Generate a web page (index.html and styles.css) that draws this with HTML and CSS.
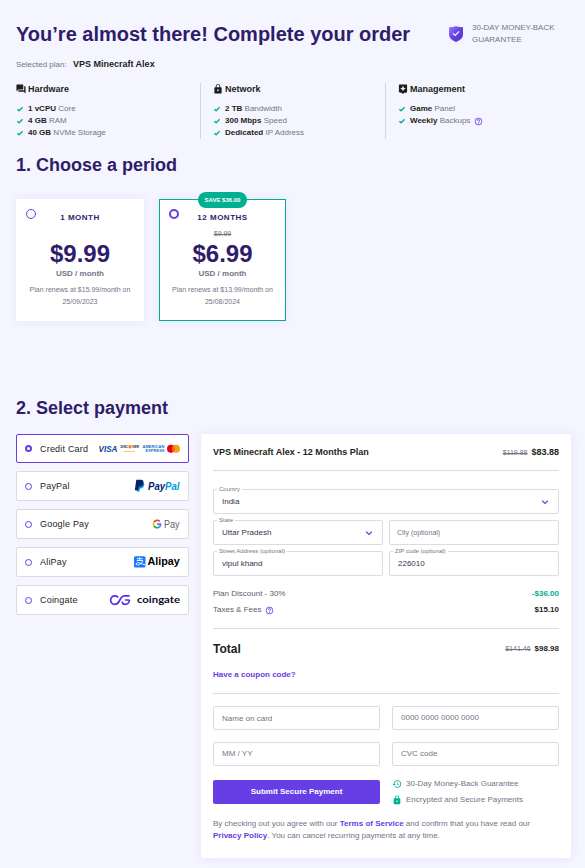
FILE: index.html
```html
<!DOCTYPE html>
<html lang="en">
<head>
<meta charset="utf-8">
<title>Complete your order</title>
<link rel="stylesheet" href="styles.css">
</head>
<body>
<svg width="0" height="0" class="defs" aria-hidden="true">
  <symbol id="check" viewBox="0 0 8 8"><path d="M1.4 4.2 3.1 5.8 6.6 2.3" fill="none" stroke="#00b090" stroke-width="1.4"/></symbol>
  <symbol id="help" viewBox="0 0 24 24"><path fill="#673de6" d="M11 18h2v-2h-2v2zm1-16C6.48 2 2 6.48 2 12s4.48 10 10 10 10-4.48 10-10S17.52 2 12 2zm0 18c-4.41 0-8-3.59-8-8s3.59-8 8-8 8 3.59 8 8-3.59 8-8 8zm0-14c-2.21 0-4 1.790-4 4h2c0-1.100.9-2 2-2s2 .9 2 2c0 2-3 1.750-3 5h2c0-2.250 3-2.500 3-5 0-2.210-1.790-4-4-4z"/></symbol>
  <symbol id="lock" viewBox="0 0 24 24"><path d="M18 8h-1V6c0-2.760-2.240-5-5-5S7 3.240 7 6v2H6c-1.100 0-2 .9-2 2v10c0 1.100.9 2 2 2h12c1.100 0 2-.9 2-2V10c0-1.100-.9-2-2-2zm-6 9c-1.100 0-2-.9-2-2s.9-2 2-2 2 .9 2 2-.9 2-2 2zm3.100-9H8.900V6c0-1.710 1.390-3.100 3.100-3.100s3.100 1.390 3.100 3.100v2z"/></symbol>
  <symbol id="chevron" viewBox="0 0 8 8"><path d="M1.200 2.700 4 5.400 6.800 2.700" fill="none" stroke="#673de6" stroke-width="1.200"/></symbol>
</svg>
<main class="page">
  <header class="top">
    <h1>You’re almost there! Complete your order</h1>
    <div class="guarantee">
      <svg width="16" height="18" viewBox="0 0 16 18"><defs><linearGradient id="sh" x1="0" y1="0" x2="1" y2="1"><stop offset="0" stop-color="#8c85ff"/><stop offset=".5" stop-color="#673de6"/><stop offset="1" stop-color="#5a2fd0"/></linearGradient></defs><path d="M1 2.300Q5 2.300 8 1.300q3 1 7 1v7.500q0 4.500-7 7.200Q1 14.300 1 9.800z" fill="url(#sh)"/><path d="m5 8.300 2.200 2.200 4-4.200" fill="none" stroke="#fff" stroke-width="1.200"/></svg>
      <p>30-DAY MONEY-BACK<br>GUARANTEE</p>
    </div>
  </header>
  <p class="selected">Selected plan: <b>VPS Minecraft Alex</b></p>

  <section class="specs">
    <div class="spec">
      <h3><svg width="10" height="10" viewBox="1 1 22 22"><path d="M21 6h-2v9H6v2c0 .55.45 1 1 1h11l4 4V7c0-.55-.45-1-1-1zm-4 6V3c0-.55-.45-1-1-1H3c-.55 0-1 .45-1 1v14l4-4h10c.55 0 1-.45 1-1z"/></svg>Hardware</h3>
      <ul>
        <li><svg><use href="#check"/></svg><b>1 vCPU</b> Core</li>
        <li><svg><use href="#check"/></svg><b>4 GB</b> RAM</li>
        <li><svg><use href="#check"/></svg><b>40 GB</b> NVMe Storage</li>
      </ul>
    </div>
    <div class="spec">
      <h3><svg width="10" height="10" viewBox="1 1 22 22"><use href="#lock" width="24" height="24"/></svg>Network</h3>
      <ul>
        <li><svg><use href="#check"/></svg><b>2 TB</b> Bandwidth</li>
        <li><svg><use href="#check"/></svg><b>300 Mbps</b> Speed</li>
        <li><svg><use href="#check"/></svg><b>Dedicated</b> IP Address</li>
      </ul>
    </div>
    <div class="spec">
      <h3><svg width="10" height="10" viewBox="1 1 22 22"><path fill-rule="evenodd" d="M19 2H5c-1.100 0-2 .9-2 2v14c0 1.100.9 2 2 2h4l3 3 3-3h4c1.100 0 2-.9 2-2V4c0-1.100-.9-2-2-2zm-5.120 10.880L12 17l-1.880-4.120L6 11l4.120-1.880L12 5l1.880 4.120L18 11z"/></svg>Management</h3>
      <ul>
        <li><svg><use href="#check"/></svg><b>Game</b> Panel</li>
        <li><svg><use href="#check"/></svg><b>Weekly</b> Backups<svg class="help"><use href="#help"/></svg></li>
      </ul>
    </div>
  </section>

  <h2>1. Choose a period</h2>
  <section class="periods">
    <article class="period">
      <i class="ring"></i>
      <h4>1 MONTH</h4>
      <s></s>
      <strong>$9.99</strong>
      <span class="unit">USD / month</span>
      <p>Plan renews at $15.99/month on 25/09/2023</p>
    </article>
    <article class="period chosen">
      <span class="save">SAVE $36.00</span>
      <i class="ring"></i>
      <h4>12 MONTHS</h4>
      <s>$9.99</s>
      <strong>$6.99</strong>
      <span class="unit">USD / month</span>
      <p>Plan renews at $13.99/month on 25/08/2024</p>
    </article>
  </section>

  <h2>2. Select payment</h2>
  <section class="checkout">
    <div class="methods">
      <div class="method active"><i class="ring"></i>Credit Card
        <svg class="logo" width="82" height="12" viewBox="0 0 82 12">
          <text x="0.500" y="8.900" class="lg visa" textLength="19" lengthAdjust="spacingAndGlyphs">VISA</text>
          <text x="22.500" y="5.300" class="lg disc" textLength="7.700" lengthAdjust="spacingAndGlyphs">DISC</text>
          <circle cx="32" cy="3.800" r="1.700" fill="#f58220"/>
          <text x="34" y="5.300" class="lg disc" textLength="7" lengthAdjust="spacingAndGlyphs">VER</text>
          <text x="26" y="9.200" class="lg net" textLength="11" lengthAdjust="spacingAndGlyphs">NETWORK</text>
          <text x="44.500" y="4.900" class="lg amex" textLength="22" lengthAdjust="spacingAndGlyphs">AMERICAN</text>
          <text x="47.500" y="9.300" class="lg amex" textLength="19" lengthAdjust="spacingAndGlyphs">EXPRESS</text>
          <circle cx="73" cy="5.800" r="4" fill="#eb001b"/><circle cx="78" cy="5.800" r="4" fill="#f79e1b"/><path d="M75.500 2.680a4 4 0 0 1 0 6.240 4 4 0 0 1 0-6.240z" fill="#ff5f00"/>
        </svg>
      </div>
      <div class="method"><i class="ring"></i>PayPal
        <svg class="logo" width="46" height="14" viewBox="0 0 46 14">
          <path d="M4 3h4.500Q11 4 10 7 9 9.500 6 9.500L5.400 12.500H2.500z" fill="#009cde"/><path d="M2.300.8h4.500Q10.300 1 9.300 4.800 8.300 7.800 4.800 7.800L4.100 11.300H.8z" fill="#012169"/>
          <text x="14" y="10.500" class="lg pp" textLength="31.500" lengthAdjust="spacingAndGlyphs"><tspan fill="#012169">Pay</tspan><tspan fill="#009cde">Pal</tspan></text>
        </svg>
      </div>
      <div class="method"><i class="ring"></i>Google Pay
        <svg class="logo" width="28" height="13" viewBox="0 0 28 13">
          <g fill="none" stroke-width="1.700"><path d="M7.700 3.300A3.600 3.600 0 0 0 2 4.200" stroke="#ea4335"/><path d="M2 4.200a3.600 3.600 0 0 0 0 3.800" stroke="#fbbc04"/><path d="M2 8a3.600 3.600 0 0 0 5.300 1" stroke="#34a853"/><path d="M7.300 9a3.600 3.600 0 0 0 1.200-2.800H5" stroke="#4285f4"/></g>
          <text x="12" y="9.600" class="lg gp" textLength="15.500" lengthAdjust="spacingAndGlyphs">Pay</text>
        </svg>
      </div>
      <div class="method"><i class="ring"></i>AliPay
        <svg class="logo" width="46" height="14" viewBox="0 0 46 14">
          <rect y="1.200" width="11.500" height="11.300" rx="1.500" fill="#1677ff"/><path d="M2.700 3.700h6M5.700 2.200V5.500M2.700 5.500h6Q7.500 9.800 3.500 10 1.700 9.800 2 8.500 3.500 6.500 7 8.500L11.500 10" fill="none" stroke="#fff" stroke-width=".9"/>
          <text x="13.500" y="10.300" class="lg ali" textLength="32.300" lengthAdjust="spacingAndGlyphs">Alipay</text>
        </svg>
      </div>
      <div class="method"><i class="ring"></i>Coingate
        <svg class="logo" width="71" height="14" viewBox="0 0 71 14">
          <path d="M9.300 4.200Q7.500 2.900 5.800 2.900A4.200 4.200 0 0 0 5.800 11.300Q8.500 11.300 10 8.500L12 5q1.300-2.100 3.600-2.100h5M20.500 7h-4.700M13.300 8.500q0 2.800 2.700 2.800 4 0 4.500-4.300" fill="none" stroke="#5a2fe0" stroke-width="1.700"/>
          <text x="28" y="9.500" class="lg cg" textLength="43" lengthAdjust="spacingAndGlyphs">coingate</text>
        </svg>
      </div>
    </div>

    <div class="panel">
      <div class="line head"><b>VPS Minecraft Alex - 12 Months Plan</b><span><s>$119.88</s><b>$83.88</b></span></div>
      <div class="address">
        <div class="field wide"><label>Country</label>India<svg><use href="#chevron"/></svg></div>
        <div class="field"><label>State</label>Uttar Pradesh<svg><use href="#chevron"/></svg></div>
        <div class="field empty">City (optional)</div>
        <div class="field"><label>Street Address (optional)</label>vipul khand</div>
        <div class="field"><label>ZIP code (optional)</label>226010</div>
      </div>
      <div class="fees">
        <div class="line"><span>Plan Discount - 30%</span><b class="green">-$36.00</b></div>
        <div class="line"><span>Taxes &amp; Fees<svg class="help"><use href="#help"/></svg></span><b>$15.10</b></div>
      </div>
      <div class="total">
        <div class="line"><b class="sum">Total</b><span><s>$141.46</s><b>$98.98</b></span></div>
        <a>Have a coupon code?</a>
      </div>
      <div class="card">
        <div class="field low">Name on card</div>
        <div class="field">0000 0000 0000 0000</div>
        <div class="field">MM / YY</div>
        <div class="field">CVC code</div>
        <button>Submit Secure Payment</button>
        <ul class="trust">
          <li><svg viewBox="0 0 24 24"><path d="M13 3c-4.970 0-9 4.030-9 9H1l3.890 3.890.07.14L9 12H6c0-3.870 3.130-7 7-7s7 3.130 7 7-3.130 7-7 7c-1.930 0-3.680-.79-4.940-2.060l-1.420 1.420C8.270 19.990 10.510 21 13 21c4.970 0 9-4.030 9-9s-4.030-9-9-9zm-1 5v5l4.280 2.540.72-1.210-3.500-2.080V8H12z"/></svg>30-Day Money-Back Guarantee</li>
          <li><svg viewBox="0 0 24 24"><use href="#lock"/></svg>Encrypted and Secure Payments</li>
        </ul>
      </div>
      <p class="legal">By checking out you agree with our <a>Terms of Service</a> and confirm that you have read our <a>Privacy Policy</a>. You can cancel recurring payments at any time.</p>
    </div>
  </section>
</main>
</body>
</html>
```
FILE: styles.css
```css
* { box-sizing: border-box; margin: 0; padding: 0; }
body {
  background: #f4f5ff;
  color: #727586;
  font: 8px/12px "Liberation Sans", Arial, sans-serif;
}
.defs { display: block; }
ul { list-style: none; }
b { color: #1d1e20; }
s { font-size: 7px; }
a { color: #673de6; font-weight: 700; }
svg { flex: none; }
.page { width: 585px; height: 868px; padding: 22px 14px 0 16px; overflow: hidden; }

.top { display: flex; height: 36px; }
h1 { width: 432px; color: #2f1c6a; font-size: 20px; line-height: 24px; white-space: nowrap; }
.guarantee { display: flex; gap: 8px; }
.guarantee svg { margin-top: 3px; }
.guarantee p { white-space: nowrap; }
.selected b { margin-left: 4px; font-size: 9px; }

.specs { display: grid; grid-template-columns: 184px 185px 1fr; height: 56px; margin-top: 12px; }
.spec + .spec { border-left: 1px solid #d5d6e3; padding-left: 12px; }
.spec h3 { display: flex; gap: 2px; align-items: center; color: #1d1e20; font-size: 9px; line-height: 12px; margin-bottom: 8px; }
.spec h3 svg { fill: #1d1e20; }
.spec li { display: flex; align-items: center; white-space: pre; }
.spec li svg { width: 8px; height: 8px; margin-right: 4px; }
.spec li svg.help { width: 9px; height: 9px; margin: 0 0 0 4px; }

h2 { color: #2f1c6a; font-size: 18px; line-height: 24px; }
.specs + h2 { margin-top: 14px; }
.periods { display: flex; gap: 15px; margin: 22px 0 75px; }
.period {
  position: relative;
  display: flex;
  flex-direction: column;
  align-items: center;
  width: 128px;
  height: 122px;
  padding-top: 13px;
  background: #fff;
  text-align: center;
  box-shadow: 0 0 8px rgba(103, 61, 230, .09);
}
.period.chosen { width: 127px; padding-top: 12px; border: 1px solid #00b090; }
.ring { flex: none; border: 1px solid #673de6; border-radius: 50%; }
.period .ring { position: absolute; top: 10px; left: 10px; width: 10px; height: 10px; }
.period.chosen .ring { top: 9px; left: 9px; border-width: 2px; }
.save {
  position: absolute;
  top: -8px;
  left: 38px;
  width: 49px;
  height: 16px;
  border-radius: 8px;
  background: #00b090;
  color: #fff;
  font-size: 6px;
  font-weight: 700;
  line-height: 16px;
}
.period h4 { color: #2f1c6a; font-size: 8px; letter-spacing: .5px; }
.period s { height: 12px; margin-top: 4px; }
.period strong { margin-top: 1px; color: #2f1c6a; font-size: 24px; line-height: 26px; }
.unit { margin-top: 1px; font-weight: 700; }
.period p { width: 116px; margin-top: 4px; font-size: 7px; }

.checkout { display: flex; gap: 12px; align-items: flex-start; margin-top: 14px; }
.methods { display: grid; gap: 8px; width: 173px; }
.method {
  display: flex;
  align-items: center;
  height: 30px;
  padding: 0 8px;
  border: 1px solid #dadce0;
  border-radius: 2px;
  background: #fff;
  color: #1d1e20;
  font-size: 9px;
  letter-spacing: .2px;
}
.method.active { height: 29px; border-color: #673de6; }
.method .ring { width: 7px; height: 7px; margin-right: 8px; }
.method.active .ring { border-width: 2px; }
.logo { margin-left: auto; letter-spacing: 0; overflow: visible; }
.lg { font-weight: 700; }
.visa { fill: #0e4595; font-size: 8.5px; font-style: italic; }
.disc { fill: #222; font-size: 4px; }
.net { fill: #f58220; font-size: 2.5px; }
.amex { fill: #1f72cd; font-size: 4px; }
.pp { font-size: 10px; font-style: italic; }
.gp { fill: #5f6368; font-size: 10px; font-weight: 400; }
.ali { fill: #000; font-size: 11.5px; }
.cg { fill: #0b0b1e; font-family: Lato, sans-serif; font-size: 10px; }

.panel {
  width: 370px;
  height: 424px;
  padding: 0 12px;
  border-radius: 2px;
  background: #fff;
  box-shadow: 0 0 10px rgba(103, 61, 230, .1);
}
.line { display: flex; justify-content: space-between; }
.line s { margin-right: 4px; }
.head { height: 37px; padding-top: 12px; border-bottom: 1px solid #dadce0; font-size: 9px; }
.address { display: grid; grid-template-columns: 170px 170px; gap: 6px; padding-top: 18px; }
.field {
  position: relative;
  display: flex;
  align-items: center;
  justify-content: space-between;
  height: 25px;
  padding: 0 8px;
  border: 1px solid #dadce0;
  border-radius: 2px;
  color: #36344d;
}
.address .wide { grid-column: span 2; }
.field label {
  position: absolute;
  top: -4px;
  left: 3px;
  padding: 0 2px;
  background: #fff;
  color: #727586;
  font-size: 6px;
  line-height: 7px;
}
.field svg { width: 8px; height: 8px; margin-right: 1px; }
.field.empty { padding-left: 7px; color: #727586; font-size: 7px; }
.fees { height: 53px; padding-top: 12px; border-bottom: 1px solid #dadce0; }
.fees .line { height: 16px; }
.fees span { display: flex; color: #5c5e6e; }
.help { width: 9px; height: 9px; margin: 2px 0 0 4px; }
.line .green { color: #00b090; }
.total { height: 65px; padding-top: 14px; border-bottom: 1px solid #dadce0; }
.total a { display: block; margin-top: 14px; }
.total .sum { font-size: 12px; }
.card { display: grid; grid-template-columns: 167px 167px; gap: 12px; padding-top: 12px; }
.card .field { height: 24px; padding-bottom: 1px; color: #727586; }
.card .low { padding: 1px 8px 0; }
button {
  height: 24px;
  margin-top: 2px;
  border: 0;
  border-radius: 2px;
  background: #673de6;
  color: #fff;
  font: 700 8px/24px "Liberation Sans", Arial, sans-serif;
}
.trust { margin-top: -2px; }
.trust li { display: flex; align-items: center; gap: 4px; height: 16px; white-space: nowrap; }
.trust svg { width: 10px; height: 10px; fill: #00b090; }
.legal { margin-top: 10px; }
```
